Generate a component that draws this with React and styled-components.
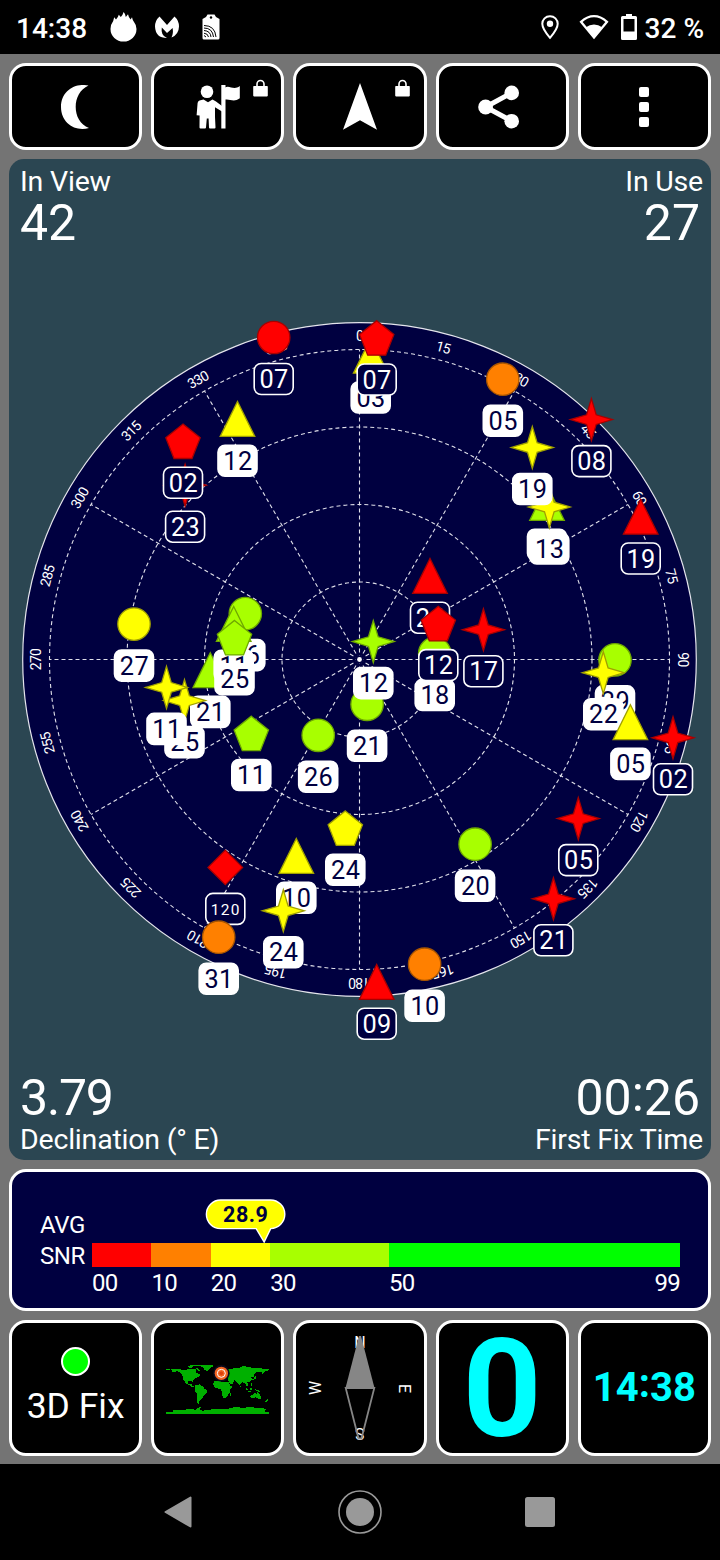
import styled, { createGlobalStyle } from 'styled-components';

const NAVY = '#000040';
const RED = '#ff0000';
const ORANGE = '#ff8000';
const YELLOW = '#ffff00';
const LIME = '#a8ff00';
const GREEN = '#00ff00';

const GlobalStyle = createGlobalStyle`
  * {
    box-sizing: border-box;
  }
  body {
    margin: 0;
    background: #000;
    color: #fff;
    font-family: Roboto, "Liberation Sans", sans-serif;
  }
  svg {
    display: block;
    flex: none;
  }
`

const Screen = styled.div`
  width: 720px;
  height: 1560px;
  display: flex;
  flex-direction: column;
  overflow: hidden;
`

const StatusBar = styled.header`
  height: 54px;
  padding: 0 16px;
  display: flex;
  align-items: center;
  font-size: 28px;
  font-weight: 500;
  white-space: nowrap;
`

const StatusText = styled.span`
  width: ${props => props.$width || 'auto'};
  line-height: 32px;
  padding-top: 3px;
`

const StatusIcons = styled.div`
  display: flex;
  align-items: center;
  gap: ${props => props.$gap}px;
  margin-right: ${props => props.$push ? 'auto' : '8px'};
`

const StatusIcon = styled.svg`
  margin-left: ${props => props.$left || 0}px;
`

const Main = styled.main`
  height: 1410px;
  padding: 9px;
  background: #747474;
  display: grid;
  grid-template-rows: 87px 1001px 142px 135px;
  gap: 9px;
`

const Row = styled.div`
  display: grid;
  grid-template-columns: repeat(5, 1fr);
  gap: 9px;
`

const Tile = styled.div`
  position: relative;
  background: #000;
  border: 3px solid #fff;
  border-radius: 17px;
  display: flex;
  flex-direction: column;
  align-items: center;
  justify-content: center;
  min-width: 0;
`

const LockBadge = styled.svg`
  position: absolute;
  top: 12.5px;
  right: 13.5px;
`

const MoonIcon = styled.svg`
  margin-right: 1px;
`

const ShareIcon = styled.svg`
  margin-right: 7px;
`

const SkyPanel = styled.section`
  background: #2b4652;
  border-radius: 15px;
  display: flex;
  flex-direction: column;
  justify-content: space-between;
  overflow: hidden;
`

const InfoRow = styled.div`
  display: flex;
  justify-content: space-between;
  height: ${props => props.$bottom ? 115 : 156}px;
  align-items: ${props => props.$bottom ? 'flex-end' : 'flex-start'};
  padding: ${props => props.$bottom ? '0 8px 3px 11px' : '6px 8px 0 11px'};
`

const Info = styled.div`
  text-align: ${props => props.$right ? 'right' : 'left'};
`

const InfoLabel = styled.div`
  font-size: 28.5px;
  line-height: ${props => props.$tight ? 33 : 34}px;
  letter-spacing: -0.2px;
`

const InfoValue = styled.div`
  font-size: 50px;
  line-height: 50px;
  letter-spacing: ${props => props.$spacing || 0}px;
  padding-right: ${props => props.$right ? 3 : 0}px;
`

const Colon = styled.span`
  vertical-align: ${props => props.$lift}px;
  line-height: 0;
`

const SnrPanel = styled.section`
  background: ${NAVY};
  border: 3px solid #fff;
  border-radius: 17px;
  padding: 27px 28px 0;
  display: flex;
  font-size: 24px;
`

const SnrName = styled.div`
  width: 52px;
  padding-top: 10.5px;
  line-height: 31px;
  letter-spacing: -0.4px;
`

const SnrScale = styled.div`
  flex: 1;
`

const Bubble = styled.svg`
  overflow: visible;
`

const Bar = styled.div`
  display: flex;
  height: 24px;
`

const Segment = styled.div`
  flex: ${props => props.$span} 0 0;
  background: ${props => props.$color};
`

const Ticks = styled.div`
  display: flex;
  line-height: 32px;
  letter-spacing: -0.7px;
`

const Tick = styled.div`
  flex: ${props => props.$span} 0 0;
  display: flex;
  justify-content: space-between;
`

const FixLamp = styled.div`
  width: 29px;
  height: 29px;
  border-radius: 50%;
  border: 2px solid #fff;
  background: ${GREEN};
`

const FixText = styled.div`
  font-size: 35.5px;
  line-height: 42px;
  margin: 9px 0 3px;
  white-space: nowrap;
`

const MapDrawing = styled.svg`
  margin-top: 2px;
`

const BigDigit = styled.div`
  color: #00ffff;
  font-size: 138px;
  line-height: 128px;
  font-weight: 700;
  padding-top: 2px;
`

const TimeText = styled.div`
  color: #00ffff;
  font-size: 40px;
  line-height: 50px;
  font-weight: 700;
  white-space: nowrap;
`

const NavBar = styled.footer`
  height: 96px;
  padding: 0 165px 0 164px;
  display: flex;
  align-items: center;
  justify-content: space-between;
`

// drawing order matters, later entries cover earlier ones
const satellites = [
  { shape: 'circle', x: 273.7, y: 337.5, color: RED, id: '07' },
  { shape: 'triangle', x: 370.7, y: 356, color: YELLOW, id: '03', used: true },
  { shape: 'pentagon', x: 376.7, y: 338, color: RED, id: '07' },
  { shape: 'circle', x: 502.8, y: 379.2, color: ORANGE, id: '05', used: true },
  { shape: 'star', x: 591.4, y: 419.6, color: RED, id: '08' },
  { shape: 'triangle', x: 547, y: 503.2, color: LIME, id: '13', used: true },
  { shape: 'star', x: 549.3, y: 507, color: YELLOW, id: '13', used: true },
  { shape: 'star', x: 532.3, y: 447.5, color: YELLOW, id: '19', used: true },
  { shape: 'triangle', x: 640.7, y: 517, color: RED, id: '19' },
  { shape: 'star', x: 185.1, y: 485.2, color: RED, id: '23' },
  { shape: 'pentagon', x: 183, y: 441.3, color: RED, id: '02' },
  { shape: 'triangle', x: 237.5, y: 419.2, color: YELLOW, id: '12', used: true },
  { shape: 'circle', x: 134, y: 624.1, color: YELLOW, id: '27', used: true },
  { shape: 'triangle', x: 210.3, y: 670.4, color: LIME, id: '21', used: true },
  { shape: 'circle', x: 245.3, y: 613.6, color: LIME, id: '16', used: true },
  { shape: 'triangle', x: 233.7, y: 624.2, color: LIME, id: '11', used: true },
  { shape: 'pentagon', x: 234.5, y: 637.7, color: LIME, id: '25', used: true },
  { shape: 'star', x: 184.5, y: 700.6, color: YELLOW, id: '25', used: true },
  { shape: 'star', x: 166.5, y: 687.4, color: YELLOW, id: '11', used: true },
  { shape: 'pentagon', x: 251.3, y: 733.5, color: LIME, id: '11', used: true },
  { shape: 'circle', x: 318.2, y: 735.3, color: LIME, id: '26', used: true },
  { shape: 'circle', x: 367.1, y: 704.3, color: LIME, id: '21', used: true },
  { shape: 'star', x: 373.3, y: 641.6, color: LIME, id: '12', used: true },
  { shape: 'triangle', x: 430, y: 576.2, color: RED, id: '24' },
  { shape: 'circle', x: 434.7, y: 653.4, color: LIME, id: '18', used: true },
  { shape: 'pentagon', x: 438.3, y: 623.6, color: RED, id: '12' },
  { shape: 'star', x: 483.4, y: 629.7, color: RED, id: '17' },
  { shape: 'circle', x: 615, y: 659.9, color: LIME, id: '29', used: true },
  { shape: 'star', x: 603.3, y: 672.7, color: YELLOW, id: '22', used: true },
  { shape: 'triangle', x: 630.4, y: 722.4, color: YELLOW, id: '05', used: true },
  { shape: 'star', x: 673, y: 737.8, color: RED, id: '02' },
  { shape: 'star', x: 578.3, y: 818.6, color: RED, id: '05' },
  { shape: 'star', x: 553.4, y: 898.8, color: RED, id: '21' },
  { shape: 'circle', x: 475.1, y: 844.2, color: LIME, id: '20', used: true },
  { shape: 'circle', x: 424.6, y: 964.2, color: ORANGE, id: '10', used: true },
  { shape: 'triangle', x: 376.7, y: 982.2, color: RED, id: '09' },
  { shape: 'pentagon', x: 345.3, y: 828.2, color: YELLOW, id: '24', used: true },
  { shape: 'triangle', x: 296.3, y: 856.2, color: YELLOW, id: '10', used: true },
  { shape: 'star', x: 283.3, y: 910.8, color: YELLOW, id: '24', used: true },
  { shape: 'diamond', x: 225.3, y: 867.4, color: RED, id: '120' },
  { shape: 'circle', x: 218.7, y: 937.2, color: ORANGE, id: '31', used: true },
];

const outlines = {
  triangle: 'M0 -17.7L17.3 17.2H-17.3Z',
  pentagon: 'M0 -17.3L17.2 -3.5L9 17.2H-9L-17.2 -3.5Z',
  diamond: 'M0 -17.3L17.3 0L0 17.3L-17.3 0Z',
  star: 'M0 -21L4.8 -4.8L21 0L4.8 4.8L0 21L-4.8 4.8L-21 0L-4.8 -4.8Z',
};

const strokes = {
  [RED]: '#a80000',
  [ORANGE]: '#a85500',
  [YELLOW]: '#a0a000',
  [LIME]: '#6ea800',
};

const range = (from, to, step) => {
  const out = [];
  for (let n = from; n <= to; n += step) out.push(n);
  return out;
};

function Satellite({ shape, x, y, color, id, used }) {
  const small = id.length > 2;
  return (
    <g transform={`translate(${x} ${y})`}>
      <g fill={color} stroke={strokes[color]} strokeWidth="1.3">
        {shape === 'circle' ? <circle r="16.2" /> : <path d={outlines[shape]} />}
      </g>
      <rect
        x="-19.5"
        y="26"
        width="39"
        height="31"
        rx="7"
        fill={used ? '#fff' : NAVY}
        stroke="#fff"
        strokeWidth="1.6"
      />
      <text
        x="0.4"
        y={small ? 47.2 : 50.5}
        textAnchor="middle"
        fontSize={small ? 15.5 : 25.3}
        letterSpacing={small ? 1.2 : 0.4}
        fill={used ? NAVY : '#fff'}
      >
        {id}
      </text>
    </g>
  );
}

function SkyPlot() {
  return (
    <svg width="702" height="730" viewBox="9 315 702 730">
      <g transform="translate(359.5 659.5)">
        <circle r="336.8" fill={NAVY} stroke="#e4e4ec" strokeWidth="1.2" />
        <g fill="none" stroke="#e0e0ea" strokeWidth="1.1" strokeDasharray="4 3">
          {[77.5, 155, 232.5, 310].map(r => <circle key={r} r={r} />)}
          {range(0, 330, 30).map(a => (
            <line key={a} x1="0" y1="0" x2="0" y2="-310" transform={`rotate(${a})`} />
          ))}
        </g>
        <circle r="4" fill={NAVY} />
        <circle r="2.4" fill="#fff" />
        <g fill="#fff" fontSize="14" textAnchor="middle" letterSpacing="-0.7">
          {range(0, 345, 15).map(a => (
            <text key={a} y="-318.2" transform={`rotate(${a})`}>{a}</text>
          ))}
        </g>
      </g>
      {satellites.map((sat, i) => <Satellite key={i} {...sat} />)}
    </svg>
  );
}

function Lock() {
  return (
    <LockBadge width="15" height="18" viewBox="0 0 15 18">
      <path d="M4 8V5a3.5 3.5 0 0 1 7 0V8" fill="none" stroke="#fff" strokeWidth="1.6" />
      <rect x="0.2" y="7" width="14.6" height="10.4" rx="0.8" fill="#fff" />
    </LockBadge>
  );
}

function Toolbar() {
  return (
    <Row>
      <Tile>
        <MoonIcon width="28" height="44" viewBox="61 85 28 44">
          <path d="M88.5 85.6C75 82.500 61 91 61 107C61 123 75 132 89 128C80 124.500 75.700 116 75.700 107C75.700 98 80 89.500 88.500 85.600Z" fill="#fff" />
        </MoonIcon>
      </Tile>
      <Tile>
        <svg width="44" height="44" viewBox="196 85 44 44" fill="#fff">
          <circle cx="207" cy="91.8" r="6.3" />
          <path d="M199.500 100.500L203.500 99.500L208 102.200L212.500 99.500L216 101.500L222 106V111.500L215 107.200V117L215.500 127.500Q215.500 128.500 214.500 128.500H210Q209 128.500 209 127.500L208.600 118.500H206.800L206 127.500Q206 128.500 205 128.500H200.500Q199.500 128.500 199.500 127.500L199.600 115.600L196.600 115.200L197.600 103Q197.800 101 199.500 100.500Z" />
          <rect x="221.300" y="85" width="4.200" height="43.500" />
          <path d="M225 87.500C229.500 84.500 233.500 91 239.800 86V98.200C233.500 102.800 230 98.500 225 99.600Z" />
        </svg>
        <Lock />
      </Tile>
      <Tile>
        <svg width="34" height="47" viewBox="343 83 34 47">
          <path d="M360 83L377 129.700L360 120.300L343 129.700Z" fill="#fff" />
        </svg>
        <Lock />
      </Tile>
      <Tile>
        <ShareIcon width="42" height="44" viewBox="477.700 85.300 42 44" fill="#fff">
          <path d="M511.300 93.200L485.300 107.300L511.300 121.300" fill="none" stroke="#fff" strokeWidth="5" />
          <circle cx="485.300" cy="107.300" r="7.400" />
          <circle cx="511.400" cy="93.200" r="7.300" />
          <circle cx="511.400" cy="121.500" r="7.300" />
        </ShareIcon>
      </Tile>
      <Tile>
        <svg width="10" height="40" viewBox="0 0 10 40" fill="#fff">
          {[0, 15, 30].map(y => <rect key={y} y={y} width="10" height="10" rx="2" />)}
        </svg>
      </Tile>
    </Row>
  );
}

const segments = [
  { label: '00', span: 10, color: RED },
  { label: '10', span: 10, color: ORANGE },
  { label: '20', span: 10, color: YELLOW },
  { label: '30', span: 20, color: LIME },
  { label: '50', span: 49, color: GREEN, end: '99' },
];

function AvgSnr({ value }) {
  return (
    <SnrPanel>
      <SnrName>
        <div>AVG</div>
        <div>SNR</div>
      </SnrName>
      <SnrScale>
        <Bubble width="100%" height="44">
          <g transform={`translate(${value * 5.94} 0)`}>
            <path
              d="M-43 1H6.700A14.300 14.300 0 0 1 7 29.600L0.500 43L-7.500 29.600H-43A14.300 14.300 0 0 1 -43 1Z"
              fill={YELLOW}
              stroke="#fff"
              strokeWidth="1.400"
            />
            <text x="-18" y="22.500" textAnchor="middle" fontSize="21.500" fontWeight="700" letterSpacing="0.500" fill={NAVY}>
              {value}
            </text>
          </g>
        </Bubble>
        <Bar>
          {segments.map(s => <Segment key={s.label} $span={s.span} $color={s.color} />)}
        </Bar>
        <Ticks>
          {segments.map(s => (
            <Tick key={s.label} $span={s.span}>
              <span>{s.label}</span>
              {s.end && <span>{s.end}</span>}
            </Tick>
          ))}
        </Ticks>
      </SnrScale>
    </SnrPanel>
  );
}

function WorldMap() {
  return (
    <MapDrawing width="103" height="49" viewBox="18 108 309 147">
      <g fill="#00b000" shapeRendering="crispEdges">
        <path d="M18 119H30V123H18ZM34 121L60 119L66 124L84 121L100 119L108 122L106 130L112 133L122 138L116 144L106 148L99 153L99 159L94 155L84 157L83 163L90 166L94 164L96 169L104 172L98 175L88 169L78 163L70 151L67 138L60 131L52 127L42 128L36 131Z" />
        <path d="M84 113L92 109H102L98 115L88 117ZM106 116L116 119L122 126L116 128L110 122Z" />
        <path d="M92 108H160L157 114L148 119L142 127L134 123L130 115L118 111L92 111Z" />
        <path d="M106 169L118 166L130 173L132 178L142 184L139 194L132 199L126 208L120 213L116 224L110 221L112 196L105 187L104 178Z" />
        <path d="M161 158L176 154L188 159L206 159L211 172L217 172L209 184L209 193L203 199L197 208L189 207L186 194L184 181L167 177L160 168Z" />
        <path d="M200 122L212 120L222 118L240 116L252 110L260 113L276 116L300 118L327 120V124L314 127L308 135L303 128L292 128L284 133L281 143L274 145L279 151L268 158L262 160L266 168L260 171L254 162L246 160L239 170L231 159L223 154L219 163L211 166L206 157L203 150L205 142L198 140Z" />
        <path d="M256 174L261 178L265 184L260 184ZM268 176H276V184H270ZM264 185H274V188H264ZM282 180L296 183L302 189L292 187ZM282 146L288 141V148L280 152ZM272 162H276V170H272ZM209 194L212 190V200H209ZM239 171H242V174H239Z" />
        <path d="M271 202L278 197L284 192L290 195L293 189L299 196L304 203L301 210L294 209L287 205L272 208ZM316 217L320 212L324 208V213L318 220Z" />
        <path d="M18 249H38V244L70 242L98 240L108 243L112 236L122 235L120 241L128 245L146 242L170 240L205 239L215 236L236 234L244 238L262 235L300 236L318 240L312 247L327 249V255H18Z" />
      </g>
      <circle cx="184" cy="133" r="25" fill="#0a0a1c" />
      <circle cx="184" cy="133" r="20" fill="#f26522" />
      <circle cx="184" cy="133" r="12" fill="none" stroke="#fff" strokeWidth="3" />
      <circle cx="184" cy="133" r="5.500" fill="#e0400c" />
    </MapDrawing>
  );
}

function Compass() {
  return (
    <svg width="126" height="128" viewBox="297 1323.500 126 128" fontSize="16" fill="#fff" textAnchor="middle">
      <text x="360" y="1347">N</text>
      <path d="M359 1335.500H361L374.500 1387.500H345.500Z" fill="#868686" />
      <text transform="translate(321 1387.500) rotate(-90)">W</text>
      <text transform="translate(399.400 1388) rotate(90)">E</text>
      <text transform="translate(360 1427.300) rotate(180)">S</text>
      <path d="M345.700 1387.500H374.300L361.500 1438H358.500Z" fill="none" stroke="#868686" strokeWidth="1.800" />
    </svg>
  );
}

export default function App() {
  return (
    <Screen>
      <GlobalStyle />

      <StatusBar>
        <StatusText $width="94px">14:38</StatusText>
        <StatusIcons $gap={18} $push>
          <svg width="27" height="30" viewBox="0 0 27 30" fill="#fff">
            <path d="M13.600 0Q15.600 2 15.800 5L18 2.200Q18.500 5 20.600 7.500L22 5.200Q22.500 8 24 10Q26.500 13 26.500 17A13 12.600 0 0 1 0.500 17Q0.500 12.500 3.200 9L4.200 5.200L6 7.500Q8 5.500 8.800 2.800L10.800 5Q12.800 3 13.600 0Z" />
          </svg>
          <svg width="24" height="23" viewBox="0 0 24 23" fill="#fff">
            <path d="M4.500 0.500L12 9L19.500 0.500Q24 4.500 24 10.500Q23.800 18.500 16.500 21.500Q18.600 17.500 17.600 12L12 17L6.800 11.500Q5.500 19.500 12 22Q0.500 22 0 10.500Q0 4.500 4.500 0.500Z" />
          </svg>
          <StatusIcon $left={5} width="18" height="26" viewBox="0 0 18 26">
            <path d="M5.500 0.500H12.500L14 3L17.500 5V24Q17.500 25.500 16 25.500H2Q0.500 25.500 0.500 24V5L4 3Z" fill="#fff" />
            <circle cx="9" cy="3.500" r="1.200" />
            <g fill="none" stroke="#000" strokeWidth="1">
              <path d="M2 11.500Q13 11.500 14 23M2 14Q10.500 14 11.500 23M2 16.500Q8.500 17 9 23M2 19.200Q6 19.500 6.500 23M2 21.500L4 23" />
            </g>
          </StatusIcon>
        </StatusIcons>
        <StatusIcons $gap={0}>
          <svg width="18" height="25" viewBox="0 0 18 25">
            <path d="M9 1.200A7.600 7.600 0 0 1 16.700 8.800C16.700 14 9 22.800 9 22.800S1.300 14 1.300 8.800A7.600 7.600 0 0 1 9 1.200Z" fill="none" stroke="#fff" strokeWidth="2" />
            <circle cx="9" cy="8.800" r="3.200" fill="#fff" />
          </svg>
          <StatusIcon $left={20} width="30" height="26" viewBox="0 0 30 26">
            <path d="M2 7.800Q15 -3.500 28 7.800L15 23.500Z" fill="none" stroke="#fff" strokeWidth="2.200" />
            <path d="M6.500 13.500Q15 7.500 23.500 13.500L15 24.500Z" fill="#fff" />
          </StatusIcon>
          <StatusIcon $left={12} width="16" height="26" viewBox="0 0 16 26">
            <path d="M5 0H11V2H14.500Q16 2 16 3.500V24.500Q16 26 14.500 26H1.500Q0 26 0 24.500V3.500Q0 2 1.500 2H5ZM2.500 5V17.500H13.500V5Z" fill="#fff" fillRule="evenodd" />
          </StatusIcon>
        </StatusIcons>
        <StatusText>32 %</StatusText>
      </StatusBar>

      <Main>
        <Toolbar />

        <SkyPanel>
          <InfoRow>
            <Info>
              <InfoLabel $tight>In View</InfoLabel>
              <InfoValue>42</InfoValue>
            </Info>
            <Info $right>
              <InfoLabel $tight>In Use</InfoLabel>
              <InfoValue $right>27</InfoValue>
            </Info>
          </InfoRow>
          <SkyPlot />
          <InfoRow $bottom>
            <Info>
              <InfoValue $spacing={-1.2}>3.79</InfoValue>
              <InfoLabel>Declination (° E)</InfoLabel>
            </Info>
            <Info $right>
              <InfoValue $right>00<Colon $lift={4}>:</Colon>26</InfoValue>
              <InfoLabel>First Fix Time</InfoLabel>
            </Info>
          </InfoRow>
        </SkyPanel>

        <AvgSnr value={28.9} />

        <Row>
          <Tile>
            <FixLamp />
            <FixText>3D Fix</FixText>
          </Tile>
          <Tile><WorldMap /></Tile>
          <Tile><Compass /></Tile>
          <Tile><BigDigit>0</BigDigit></Tile>
          <Tile>
            <TimeText>14<Colon $lift={4}>:</Colon>38</TimeText>
          </Tile>
        </Row>
      </Main>

      <NavBar>
        <svg width="30" height="32" viewBox="0 0 30 32">
          <path d="M26.500 1.500V30.500L1.500 16Z" fill="#999" stroke="#999" strokeWidth="2" strokeLinejoin="round" />
        </svg>
        <svg width="44" height="44" viewBox="0 0 44 44">
          <circle cx="22" cy="22" r="21" fill="none" stroke="#999" strokeWidth="1.600" />
          <circle cx="22" cy="22" r="14" fill="#999" />
        </svg>
        <svg width="30" height="30" viewBox="0 0 30 30">
          <rect width="30" height="30" rx="2.500" fill="#999" />
        </svg>
      </NavBar>
    </Screen>
  );
}
